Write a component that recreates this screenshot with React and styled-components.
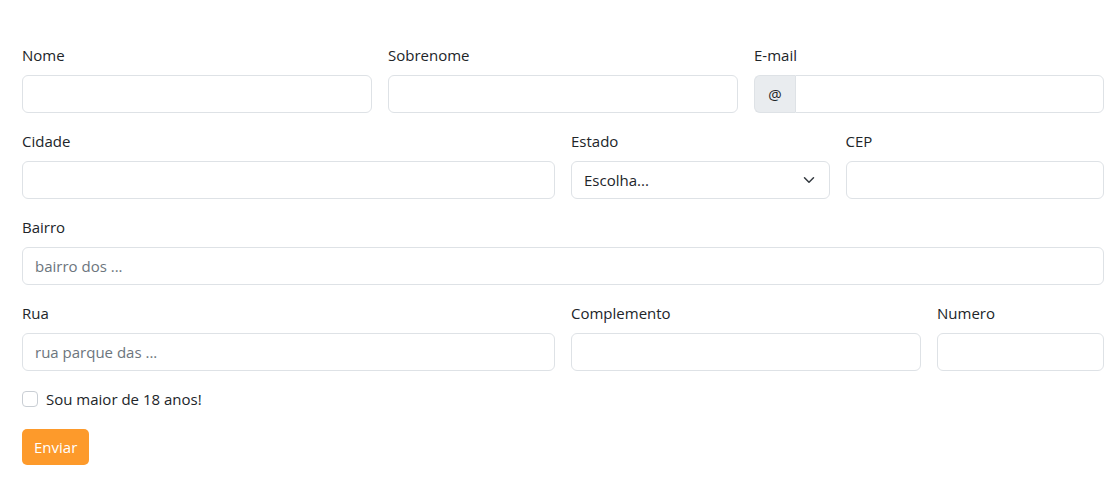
import React from "react";
import styled, { createGlobalStyle } from "styled-components";

const GlobalStyle = createGlobalStyle`
  * { box-sizing: border-box; }
  body {
    margin: 0;
    background: #fff;
    color: #212529;
    font-family: "Open Sans", "Noto Sans", sans-serif;
    font-size: 15px;
  }
`;

const Form = styled.form`
  padding: 43px 12px 0 22px;
  width: 1116px;
  display: grid;
  grid-template-columns: repeat(12, 1fr);
  column-gap: 16px;
  row-gap: 16px;
`;

const Field = styled.div`
  grid-column: span ${(p) => p.span};
  display: flex;
  flex-direction: column;
  min-width: 0;
`;

const Label = styled.label`
  height: 24px;
  line-height: 24px;
  margin-bottom: 8px;
  font-size: 15px;
`;

const Input = styled.input`
  height: 38px;
  width: 100%;
  border: 1px solid #dee2e6;
  border-radius: ${(p) => (p.$grouped ? "0 6px 6px 0" : "6px")};
  padding: 0 12px;
  font-family: inherit;
  font-size: 15px;
  color: #212529;
  background: #fff;
  outline: none;
  &::placeholder {
    color: #6c757d;
  }
`;

const Group = styled.div`
  display: flex;
  height: 38px;
`;

const GroupText = styled.span`
  width: 41px;
  flex: none;
  display: flex;
  align-items: center;
  justify-content: center;
  background: #e9ecef;
  border: 1px solid #dee2e6;
  border-right: none;
  border-radius: 6px 0 0 6px;
  font-size: 15px;
`;

const SelectBox = styled.div`
  height: 38px;
  border: 1px solid #dee2e6;
  border-radius: 6px;
  padding: 0 14px 0 12px;
  display: flex;
  align-items: center;
  justify-content: space-between;
  font-size: 15px;
`;

const Check = styled.div`
  grid-column: span 12;
  display: flex;
  align-items: center;
  gap: 8px;
  height: 24px;
`;

const Box = styled.span`
  width: 16px;
  height: 16px;
  border: 1px solid #c9ced4;
  border-radius: 4px;
  background: #fff;
`;

const Button = styled.button`
  grid-column: span 12;
  justify-self: start;
  height: 36px;
  padding: 0 12px;
  border: none;
  border-radius: 5px;
  background: #fd9a2b;
  color: #fff;
  font-family: inherit;
  font-size: 15px;
  margin-top: 2px;
`;

export default function App() {
  return (
    <>
      <GlobalStyle />
      <Form>
        <Field span={4}>
          <Label>Nome</Label>
          <Input />
        </Field>
        <Field span={4}>
          <Label>Sobrenome</Label>
          <Input />
        </Field>
        <Field span={4}>
          <Label>E-mail</Label>
          <Group>
            <GroupText>@</GroupText>
            <Input $grouped />
          </Group>
        </Field>

        <Field span={6}>
          <Label>Cidade</Label>
          <Input />
        </Field>
        <Field span={3}>
          <Label>Estado</Label>
          <SelectBox>
            <span>Escolha...</span>
            <svg width="12" height="12" viewBox="0 0 16 16">
              <path d="M2 5l6 6 6-6" fill="none" stroke="#343a40" strokeWidth="2" strokeLinecap="round" strokeLinejoin="round" />
            </svg>
          </SelectBox>
        </Field>
        <Field span={3}>
          <Label>CEP</Label>
          <Input />
        </Field>

        <Field span={12}>
          <Label>Bairro</Label>
          <Input placeholder="bairro dos ..." />
        </Field>

        <Field span={6}>
          <Label>Rua</Label>
          <Input placeholder="rua parque das ..." />
        </Field>
        <Field span={4}>
          <Label>Complemento</Label>
          <Input />
        </Field>
        <Field span={2}>
          <Label>Numero</Label>
          <Input />
        </Field>

        <Check>
          <Box />
          <span>Sou maior de 18 anos!</span>
        </Check>
        <Button type="button">Enviar</Button>
      </Form>
    </>
  );
}
